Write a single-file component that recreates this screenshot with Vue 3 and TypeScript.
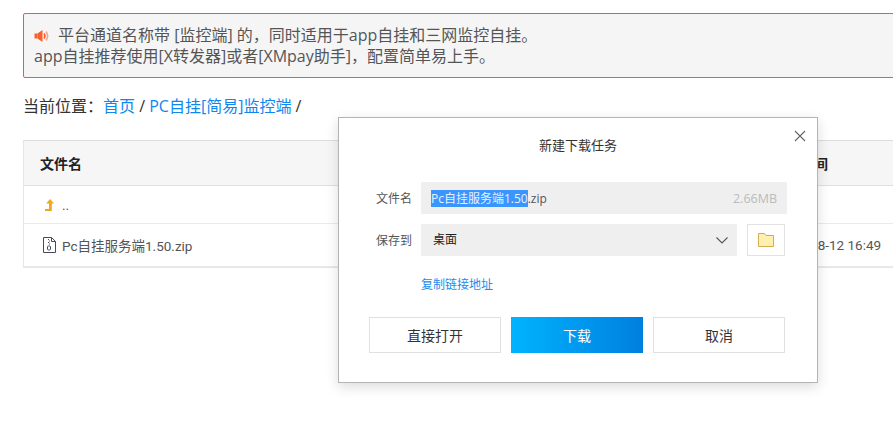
<script setup lang="ts">
interface FileRow { name: string; time: string }
const file: FileRow = { name: 'Pc自挂服务端1.50.zip', time: '2018-08-12 16:49' }
</script>

<template>
  <div class="page">
    <div class="alert">
      <div class="alert-line">
        <svg class="speaker" width="16" height="14" viewBox="0 0 16 14">
          <path d="M0.500 4.500h3v5h-3z" fill="#f9602c" />
          <path d="M3.500 4.500L8.500 1v12L3.500 9.500z" fill="#f9602c" />
          <path d="M10 4.500q1.800 2.500 0 5" fill="none" stroke="#f9602c" stroke-width="1.600" />
          <path d="M12 2.500q3.300 4.500 0 9" fill="none" stroke="#f9a58a" stroke-width="1.600" />
        </svg>
        <span>平台通道名称带 [监控端] 的，同时适用于app自挂和三网监控自挂。</span>
      </div>
      <div class="alert-line">app自挂推荐使用[X转发器]或者[XMpay助手]，配置简单易上手。</div>
    </div>

    <div class="crumb">当前位置：<a>首页</a> / <a>PC自挂[简易]监控端</a> /</div>

    <div class="table">
      <div class="row head">
        <div class="cell-name">文件名</div>
        <div class="cell-time">修改时间</div>
      </div>
      <div class="row up">
        <div class="cell-name">
          <svg class="row-icon" width="12" height="14" viewBox="0 0 12 14">
            <path d="M7 1L11 5.500H8.800V13H2V11H6V5.500H3.200z" fill="#eea81c" />
          </svg>
          <span>..</span>
        </div>
      </div>
      <div class="row zip">
        <div class="cell-name">
          <svg class="row-icon" width="13" height="16" viewBox="0 0 13 16">
            <path d="M.5.500h8l4 4v11H.5z" fill="#fff" stroke="#4a4a5c" />
            <path d="M8.500 .5V4.500h4" fill="none" stroke="#4a4a5c" />
            <path d="M5 2h1v1H5zM6 3.500h1v1H6zM5 5h1v1H5zM6 6.500h1v1H6z" fill="#4a4a5c" />
            <rect x="4.500" y="9" width="3" height="4" rx="1" fill="none" stroke="#4a4a5c" />
          </svg>
          <span>{{ file.name }}</span>
        </div>
        <div class="cell-time">{{ file.time }}</div>
      </div>
    </div>

    <div class="modal">
      <header class="modal-title">新建下载任务</header>
      <svg class="close" width="12" height="12" viewBox="0 0 12 12">
        <path d="M1 1l10 10M11 1L1 11" stroke="#666" stroke-width="1.100" fill="none" />
      </svg>

      <div class="form-row first">
        <label>文件名</label>
        <div class="field name-field">
          <span class="filename"><span class="selected">Pc自挂服务端1.50</span>.zip</span>
          <span class="size">2.66MB</span>
        </div>
      </div>

      <div class="form-row second">
        <label>保存到</label>
        <div class="field select-field">
          <span class="folder-name">桌面</span>
          <svg width="12" height="7" viewBox="0 0 12 7">
            <path d="M.5.5L6 6 11.500.5" stroke="#555" stroke-width="1.100" fill="none" />
          </svg>
        </div>
        <div class="folder-btn">
          <svg width="16" height="14" viewBox="0 0 16 14">
            <path d="M.5.500h6l1.500 2h7.500v11H.5z" fill="#fdf0b0" stroke="#d6ab52" />
          </svg>
        </div>
      </div>

      <a class="copy-link">复制链接地址</a>

      <div class="actions">
        <button class="btn">直接打开</button>
        <button class="btn primary">下载</button>
        <button class="btn">取消</button>
      </div>
    </div>
  </div>
</template>

<style>
html, body { margin: 0; overflow: hidden; background: #fff; }
</style>

<style scoped>
.page {
  position: relative;
  width: 893px;
  height: 438px;
  overflow: hidden;
  padding: 13px 0 0 23px;
  box-sizing: border-box;
  font-family: "Open Sans", "Noto Sans CJK SC", sans-serif;
  font-size: 16px;
  color: #333;
}
.alert {
  width: 880px;
  height: 65px;
  box-sizing: border-box;
  padding: 11px 10px;
  background: #f5f5f5;
  border: 1px solid #ff5722;
  border-radius: 2px;
  font-size: 16px;
  line-height: 21px;
  color: #555;
}
.alert-line { white-space: nowrap; display: flex; align-items: center; height: 21px; }
.speaker { margin-right: 8px; flex: none; }
.crumb {
  margin-top: 16px;
  height: 24px;
  line-height: 24px;
  color: #333;
  white-space: nowrap;
}
.crumb a { color: #0f86f0; }
.table {
  margin-top: 22px;
  width: 880px;
  border: 1px solid #e6e6e6;
  border-top-color: #ddd;
  border-right: 0;
  font-family: Roboto, "Noto Sans CJK SC", sans-serif;
}
.row {
  display: flex;
  align-items: center;
  padding-left: 16px;
  font-size: 13.500px;
  color: #555;
  border-bottom: 1px solid #eaeaea;
}
.head {
  height: 44px;
  background: #f6f6f6;
  color: #222;
  font-size: 14px;
  font-weight: 700;
  border-bottom-color: #e0e0e0;
}
.up { height: 37px; }
.zip { height: 42px; }
.cell-name { display: flex; align-items: center; gap: 7px; }
.row-icon { flex: none; margin-left: 3px; }
.zip .row-icon { margin-left: 3px; margin-right: -1px; }
.cell-time { width: 109px; margin: 0 23px 0 auto; white-space: nowrap; flex: none; box-sizing: border-box; }
.zip .cell-time { padding-left: 4px; }
.modal {
  position: absolute;
  left: 338px;
  top: 117px;
  width: 480px;
  height: 266px;
  box-sizing: border-box;
  background: #fff;
  border: 1px solid #b4b4b4;
  box-shadow: 0 4px 12px rgba(0, 0, 0, 0.14);
  font-size: 13px;
  padding-left: 30px;
}
.modal-title {
  margin-left: -30px;
  padding-top: 18px;
  height: 64px;
  box-sizing: border-box;
  line-height: 18px;
  text-align: center;
  color: #333;
}
.close { position: absolute; right: 11px; top: 12px; }
.form-row { display: flex; align-items: center; font-size: 12px; }
.form-row label { width: 52px; padding-left: 7px; box-sizing: border-box; color: #555; }
.second { margin-top: 10px; }
.field {
  height: 32px;
  background: #efefef;
  display: flex;
  align-items: center;
  justify-content: space-between;
  box-sizing: border-box;
  padding: 0 10px;
}
.name-field { width: 366px; }
.select-field { width: 316px; padding-right: 9px; padding-left: 12px; }
.filename { color: #555; white-space: nowrap; font-size: 12px; }
.selected { background: #3a95ff; color: #e8f2ff; }
.size { color: #bbb; font-size: 12.500px; }
.folder-name { color: #222; margin-top: -2px; }
.folder-btn {
  margin-left: 10px;
  width: 38px;
  height: 32px;
  box-sizing: border-box;
  border: 1px solid #e2e2e2;
  display: flex;
  align-items: center;
  justify-content: center;
}
.copy-link {
  display: block;
  margin: 20px 0 0 52px;
  height: 18px;
  line-height: 18px;
  font-size: 12px;
  color: #1a8cf0;
}
.actions { display: flex; gap: 10px; margin-top: 23px; }
.btn {
  width: 132px;
  height: 36px;
  box-sizing: border-box;
  background: #fff;
  border: 1px solid #e0e0e0;
  font: inherit;
  font-size: 14px;
  color: #333;
  padding: 0;
}
.primary {
  border: 0;
  background: linear-gradient(90deg, #00b4ff, #007fdf);
  color: #fff;
}
</style>
